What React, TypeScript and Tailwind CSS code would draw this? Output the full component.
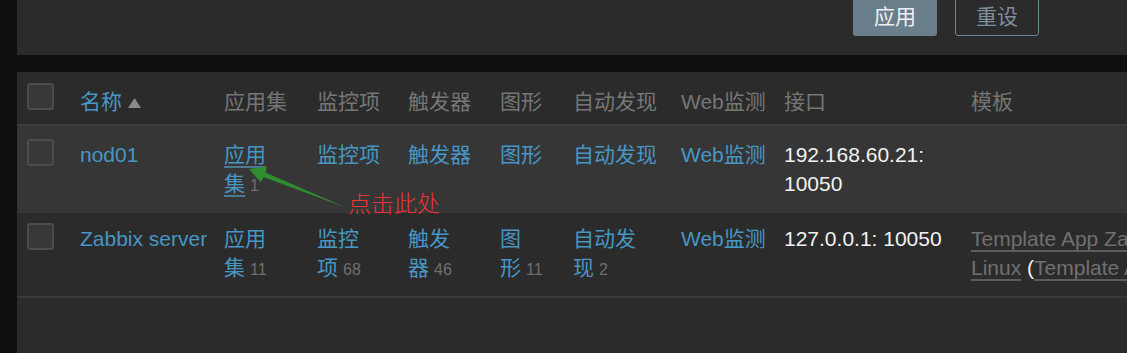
import React from "react";

const BLUE = "text-[#4796c4]";

function Checkbox() {
  return <div className="w-[27px] h-[27px] rounded-[3px] border-2 border-[#4c4c4c] bg-[#383838]" />;
}

function Count({ n }: { n: string }) {
  return <span className="ml-[5px] text-[16px] text-[#6f6f6f]">{n}</span>;
}

function Lines({ a, b, n }: { a: string; b: string; n: string }) {
  return (
    <div className={BLUE}>
      <div>{a}</div>
      <div>
        {b}
        <Count n={n} />
      </div>
    </div>
  );
}

const COLS =
  "grid grid-cols-[63px_144px_93px_91px_92px_73px_108px_103px_187px_minmax(0,1fr)]";

export default function App() {
  const ul = "underline decoration-[#5c5c5c] decoration-2 underline-offset-[4px]";
  return (
    <div className="relative w-[1127px] h-[353px] overflow-hidden bg-[#0e0f11] pl-[17px] flex flex-col font-['Liberation_Sans','Noto_Sans_CJK_SC',sans-serif] text-[21px] leading-[29px]">
      <div className="h-[55px] shrink-0 bg-[#2b2b2b] flex justify-end pr-[88px] gap-[18px]">
        <button className="-mt-[4px] h-[40px] w-[84px] rounded-[3px] bg-[#687f8b] text-[#f0f0f0]">
          应用
        </button>
        <button className="-mt-[4px] h-[40px] w-[84px] rounded-[3px] border border-[#6b8593] text-[#7d919c]">
          重设
        </button>
      </div>
      <div className="mt-[17px] flex-1 bg-[#2b2b2b]">
        {/* header */}
        <div className={`${COLS} h-[54px] border-b-2 border-[#3c3c3c] text-[#767676]`}>
          <div className="pl-[10px] pt-[11px]">
            <Checkbox />
          </div>
          <div className="pt-[15px] flex items-start">
            <span className={BLUE}>名称</span>
            <svg width="13" height="10" viewBox="0 0 13 10" className="ml-[6px] mt-[11px]">
              <polygon points="6.5,0 13,10 0,10" fill="#8a8a8a" />
            </svg>
          </div>
          <div className="pt-[15px]">应用集</div>
          <div className="pt-[15px]">监控项</div>
          <div className="pt-[15px]">触发器</div>
          <div className="pt-[15px]">图形</div>
          <div className="pt-[15px]">自动发现</div>
          <div className="pt-[15px]">Web监测</div>
          <div className="pt-[15px]">接口</div>
          <div className="pt-[15px]">模板</div>
        </div>
        {/* row 1 */}
        <div className={`${COLS} h-[87px] bg-[#363636]`}>
          <div className="pl-[10px] pt-[13px]">
            <Checkbox />
          </div>
          <div className={`pt-[14px] ${BLUE}`}>nod01</div>
          <div className={`pt-[14px] ${BLUE}`}>
            <div>
              <span className="underline decoration-[#4d7896] decoration-2 underline-offset-[4px]">应用</span>
            </div>
            <div>
              <span className="underline decoration-[#4d7896] decoration-2 underline-offset-[4px]">集</span>
              <Count n="1" />
            </div>
          </div>
          <div className={`pt-[14px] ${BLUE}`}>监控项</div>
          <div className={`pt-[14px] ${BLUE}`}>触发器</div>
          <div className={`pt-[14px] ${BLUE}`}>图形</div>
          <div className={`pt-[14px] ${BLUE}`}>自动发现</div>
          <div className={`pt-[14px] ${BLUE}`}>Web监测</div>
          <div className="pt-[14px] text-[#f2f2f2]">
            <div>192.168.60.21:</div>
            <div>10050</div>
          </div>
          <div />
        </div>
        {/* row 2 */}
        <div className={`${COLS} h-[85px] border-b-2 border-[#393939]`}>
          <div className="pl-[10px] pt-[10px]">
            <Checkbox />
          </div>
          <div className={`pt-[11px] ${BLUE} whitespace-nowrap`}>Zabbix server</div>
          <div className="pt-[11px]">
            <Lines a="应用" b="集" n="11" />
          </div>
          <div className="pt-[11px]">
            <Lines a="监控" b="项" n="68" />
          </div>
          <div className="pt-[11px]">
            <Lines a="触发" b="器" n="46" />
          </div>
          <div className="pt-[11px]">
            <Lines a="图" b="形" n="11" />
          </div>
          <div className="pt-[11px]">
            <Lines a="自动发" b="现" n="2" />
          </div>
          <div className={`pt-[11px] ${BLUE}`}>Web监测</div>
          <div className="pt-[11px] text-[#f2f2f2] whitespace-nowrap">127.0.0.1: 10050</div>
          <div className="pt-[11px] whitespace-nowrap text-[#707070]">
            <div>
              <span className={ul}>Template App Zabbix Agent</span>, <span className={ul}>Template OS</span>
            </div>
            <div>
              <span className={ul}>Linux</span> <span className="text-[#f2f2f2]">(</span>
              <span className={ul}>Template App Zabbix Agent</span>
              <span className="text-[#f2f2f2]">)</span>
            </div>
          </div>
        </div>
      </div>
      {/* annotation overlay */}
      <svg
        className="absolute left-0 top-0 pointer-events-none"
        width="1127"
        height="353"
        viewBox="0 0 1127 353"
      >
        <polygon
          points="249,169 266.5,166.5 265.9,172.7 347,208 264.1,177.3 260.5,182"
          fill="#2f8c2f"
        />
      </svg>
      <div className="absolute left-[348px] top-[191px] text-[23px] leading-[23px] text-[#eb3434] font-['Noto_Sans_CJK_SC',sans-serif] font-light">
        点击此处
      </div>
    </div>
  );
}
